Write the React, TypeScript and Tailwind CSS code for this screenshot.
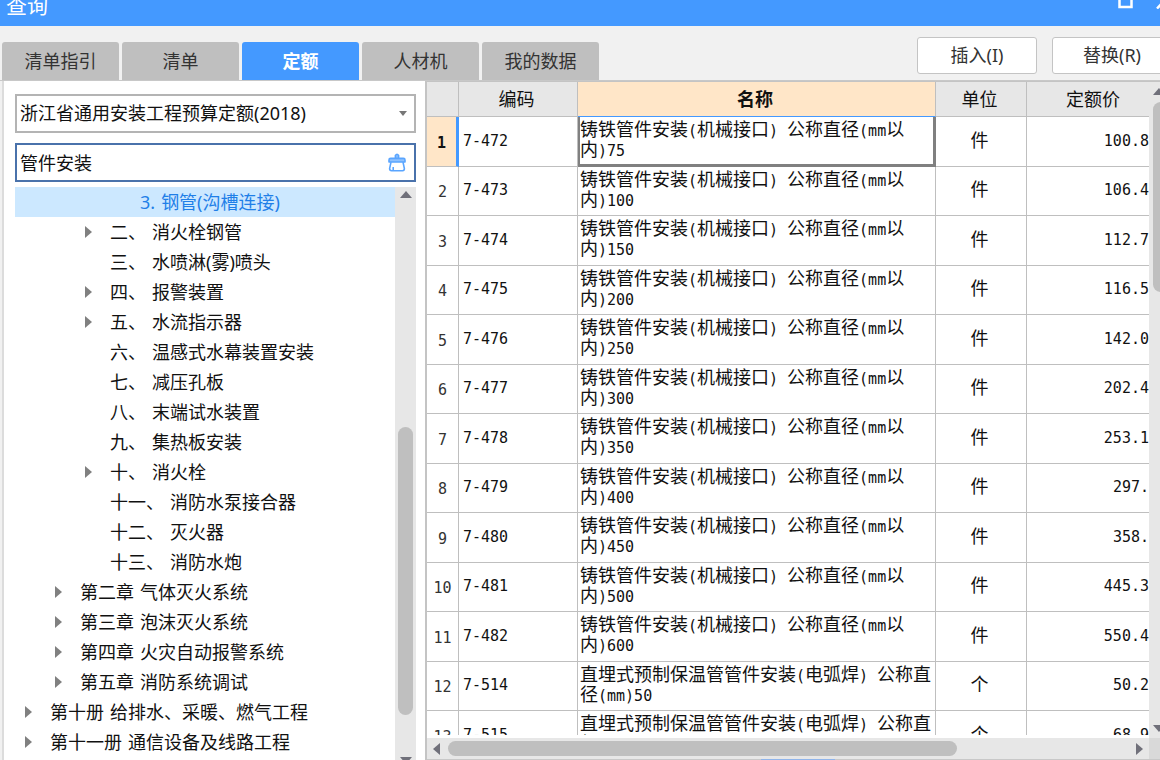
import { useState } from "react"
import clsx from "clsx"

type TreeNode = { no: string; title: string; level: number; expandable?: boolean }

const tabs = ["清单指引", "清单", "定额", "人材机", "我的数据"]

const tree: TreeNode[] = [
  { no: "3.", title: "钢管(沟槽连接)", level: 3 },
  { no: "二、", title: "消火栓钢管", level: 2, expandable: true },
  { no: "三、", title: "水喷淋(雾)喷头", level: 2 },
  { no: "四、", title: "报警装置", level: 2, expandable: true },
  { no: "五、", title: "水流指示器", level: 2, expandable: true },
  { no: "六、", title: "温感式水幕装置安装", level: 2 },
  { no: "七、", title: "减压孔板", level: 2 },
  { no: "八、", title: "末端试水装置", level: 2 },
  { no: "九、", title: "集热板安装", level: 2 },
  { no: "十、", title: "消火栓", level: 2, expandable: true },
  { no: "十一、", title: "消防水泵接合器", level: 2 },
  { no: "十二、", title: "灭火器", level: 2 },
  { no: "十三、", title: "消防水炮", level: 2 },
  { no: "第二章", title: "气体灭火系统", level: 1, expandable: true },
  { no: "第三章", title: "泡沫灭火系统", level: 1, expandable: true },
  { no: "第四章", title: "火灾自动报警系统", level: 1, expandable: true },
  { no: "第五章", title: "消防系统调试", level: 1, expandable: true },
  { no: "第十册", title: "给排水、采暖、燃气工程", level: 0, expandable: true },
  { no: "第十一册", title: "通信设备及线路工程", level: 0, expandable: true },
]

const indents = ["pl-[10px]", "pl-[40px]", "pl-[70px]", "pl-[100px]"]

const castIron = "铸铁管件安装(机械接口) 公称直径(mm以内)"
const buried = "直埋式预制保温管管件安装(电弧焊) 公称直径(mm)"

const rows = [
  { code: "7-472", name: castIron + "75", unit: "件", price: "100.8" },
  { code: "7-473", name: castIron + "100", unit: "件", price: "106.4" },
  { code: "7-474", name: castIron + "150", unit: "件", price: "112.7" },
  { code: "7-475", name: castIron + "200", unit: "件", price: "116.5" },
  { code: "7-476", name: castIron + "250", unit: "件", price: "142.0" },
  { code: "7-477", name: castIron + "300", unit: "件", price: "202.4" },
  { code: "7-478", name: castIron + "350", unit: "件", price: "253.1" },
  { code: "7-479", name: castIron + "400", unit: "件", price: "297." },
  { code: "7-480", name: castIron + "450", unit: "件", price: "358." },
  { code: "7-481", name: castIron + "500", unit: "件", price: "445.3" },
  { code: "7-482", name: castIron + "600", unit: "件", price: "550.4" },
  { code: "7-514", name: buried + "50", unit: "个", price: "50.2" },
  { code: "7-515", name: buried + "65", unit: "个", price: "68.9" },
]

function Arrow({ dir, className }: { dir: "up" | "down" | "left" | "right"; className?: string }) {
  const points = {
    up: "0,7 6,0 12,7",
    down: "0,0 12,0 6,7",
    left: "7,0 7,12 0,6",
    right: "0,0 7,6 0,12",
  }[dir]
  const vertical = dir === "up" || dir === "down"
  return (
    <svg
      width={vertical ? 12 : 7}
      height={vertical ? 7 : 12}
      viewBox={vertical ? "0 0 12 7" : "0 0 7 12"}
      className={clsx("shrink-0", className)}
      aria-hidden="true"
    >
      <polygon points={points} fill="currentColor" />
    </svg>
  )
}

// Latin runs are half the width of a Chinese character in the grid
function GridText({ text }: { text: string }) {
  return text.split(/([\x20-\x7e]+)/).map((part, i) =>
    i % 2 ? (
      <span key={i} className="text-[15px] leading-none">
        {part}
      </span>
    ) : (
      part
    ),
  )
}

function TitleBar() {
  return (
    <header className="flex h-[26px] shrink-0 items-start justify-between bg-[#4499ff] pl-[6px] text-white">
      <h1 className="text-[21px] leading-[10px]">查询</h1>
      <svg width="42" height="9" viewBox="0 0 42 9" fill="none" stroke="currentColor" aria-hidden="true">
        <path d="M1.5 -7H13.5V7H1.5Z" strokeWidth="2.5" />
        <path d="M39 8.5L53 -6" strokeWidth="2.5" />
      </svg>
    </header>
  )
}

function Toolbar() {
  const [active, setActive] = useState("定额")
  return (
    <div className="flex h-[54px] shrink-0 items-end justify-between overflow-hidden bg-[#f1f1f1] pl-[2px]">
      <nav className="flex gap-[3px]">
        {tabs.map((tab) => (
          <button
            key={tab}
            onClick={() => setActive(tab)}
            className={clsx(
              "h-[38px] w-[117px] rounded-t-[3px] text-[18px]",
              tab === active ? "bg-[#4499ff] font-bold text-white" : "bg-[#bfbfbf] text-[#333333]",
            )}
          >
            {tab}
          </button>
        ))}
      </nav>
      <div className="-mr-3 flex shrink-0 gap-[15px] self-start pt-[11px]">
        <button className="h-[37px] w-[120px] rounded-[3px] border border-[#c4c4c4] bg-white text-[18px] text-[#333333]">
          插入(I)
        </button>
        <button className="h-[37px] w-[120px] rounded-[3px] border border-[#c4c4c4] bg-white text-[18px] text-[#333333]">
          替换(R)
        </button>
      </div>
    </div>
  )
}

function BrushIcon() {
  return (
    <svg width="18" height="19" viewBox="0 0 18 19" fill="none" stroke="#5aa5ff" strokeWidth="1.6" strokeLinejoin="round" aria-hidden="true">
      <path d="M7.4 5.4V2.4Q9 0 10.6 2.4V5.4" fill="#8fc2ff" />
      <path d="M2.6 5.4H15.4Q17 5.4 17 7V9H1V7Q1 5.4 2.6 5.4Z" fill="#8fc2ff" />
      <path d="M3 9.2L1.6 15.6Q1.6 17.8 3.6 17.8H14.6Q16.4 17.8 16.4 15.6L15 9.2" />
      <path d="M5.2 17.4V14" />
    </svg>
  )
}

function Sidebar() {
  const [query, setQuery] = useState("管件安装")
  return (
    <aside className="flex w-[423px] shrink-0 flex-col border-l-2 border-[#dcdcdc] bg-white pt-[13px] pr-[9px] pl-[11px]">
      <div className="grid shrink-0">
        <select
          aria-label="定额库"
          className="col-start-1 row-start-1 h-[39px] appearance-none border-2 border-[#b4b4b4] bg-white px-[3px] text-[18px] text-[#111111]"
        >
          <option>浙江省通用安装工程预算定额(2018)</option>
        </select>
        <svg
          width="8"
          height="5"
          viewBox="0 0 8 5"
          className="pointer-events-none col-start-1 row-start-1 mr-[9px] self-center justify-self-end text-[#777777]"
          aria-hidden="true"
        >
          <polygon points="0,0 8,0 4,5" fill="currentColor" />
        </svg>
      </div>
      <div className="mt-[10px] flex h-[39px] shrink-0 items-center border-2 border-[#4a72ab] pr-[8px] pl-[3px]">
        <input
          aria-label="查询条件"
          value={query}
          onChange={(e) => setQuery(e.target.value)}
          className="min-w-0 flex-1 pt-[2px] text-[18px] text-[#111111] outline-none"
        />
        <button aria-label="清除" onClick={() => setQuery("")}>
          <BrushIcon />
        </button>
      </div>
      <div className="mt-[5px] flex min-h-0 flex-1 overflow-hidden">
        <ul className="min-w-0 flex-1">
          {tree.map((node, i) => (
            <li key={node.title}>
              <button
                className={clsx(
                  "flex h-[30px] w-full items-center gap-[18px] text-[18px] whitespace-nowrap",
                  indents[node.level],
                  i === 0 ? "bg-[#cce8ff] text-[#1f7fe8]" : "text-[#111111]",
                )}
              >
                <Arrow dir="right" className={node.expandable ? "text-[#808080]" : "invisible"} />
                <span className="flex gap-[6px]">
                  <span>{node.no}</span>
                  <span>{node.title}</span>
                </span>
              </button>
            </li>
          ))}
        </ul>
        <div className="flex w-[21px] shrink-0 flex-col items-center bg-[#e7e7e7] pt-[4px] text-[#70707a]">
          <Arrow dir="up" />
          <div className="mt-[229px] h-[288px] w-[15px] shrink-0 rounded-full bg-[#bfbfbf]" />
          <Arrow dir="down" className="mt-[42px]" />
        </div>
      </div>
    </aside>
  )
}

function QuotaTable() {
  const head = "border-r border-b border-[#bfbfbf] bg-[#e7e7e7] pt-[2px] pr-[3px] pb-0 pl-0 font-normal"
  const cell = "border-r border-b border-[#bfbfbf] pb-[2px]"
  return (
    <table className="w-full table-fixed border-separate border-spacing-0 font-['DejaVu_Sans_Mono','Noto_Sans_CJK_SC',monospace] text-[18px] leading-[20px] text-[#111111]">
      <colgroup>
        <col className="w-[32px]" />
        <col className="w-[119px]" />
        <col />
        <col className="w-[91px]" />
        <col className="w-[122px]" />
      </colgroup>
      <thead>
        <tr className="h-[35px]">
          <th className={head} aria-label="序号" />
          <th className={head}>编码</th>
          <th className="border-r border-b border-r-[#bfbfbf] border-b-[#4499ff] bg-[#ffe6c8] pt-[2px] pr-[3px] pb-0 pl-0 font-bold">
            名称
          </th>
          <th className={head}>单位</th>
          <th className="border-b border-[#bfbfbf] bg-[#e7e7e7] pt-[2px] pr-0 pb-0 pl-[10px] font-normal">定额价</th>
        </tr>
      </thead>
      <tbody>
        {rows.map((row, i) => (
          <tr key={row.code} className="odd:h-[50px] even:h-[49px]">
            <th
              scope="row"
              className={clsx(
                "border-b border-b-[#bfbfbf] pt-[2px] text-[15px]",
                i === 0
                  ? "border-r-3 border-r-[#4499ff] bg-[#ffe6c8] font-bold"
                  : "border-r border-r-[#bfbfbf] font-normal text-[#333333]",
              )}
            >
              {i + 1}
            </th>
            <td className={clsx(cell, "pl-[4px] text-[15px]")}>{row.code}</td>
            <td
              className={clsx(
                "pt-[3px] pb-0 align-top",
                i === 0
                  ? "border-r-3 border-b-3 border-l-2 border-[#808080] pl-0"
                  : "border-r border-b border-[#bfbfbf] pl-[2px]",
              )}
            >
              <GridText text={row.name} />
            </td>
            <td className={clsx(cell, "pr-[3px] text-center")}>{row.unit}</td>
            <td className="border-b border-[#bfbfbf] pb-[2px] text-right text-[15px]">{row.price}</td>
          </tr>
        ))}
      </tbody>
    </table>
  )
}

export default function App() {
  return (
    <div className="flex h-screen flex-col overflow-hidden bg-[#f1f1f1] font-['Noto_Sans','Noto_Sans_CJK_SC',sans-serif]">
      <TitleBar />
      <Toolbar />
      <main className="flex min-h-0 flex-1 border-t border-[#c8c8c8] pl-[2px]">
        <Sidebar />
        <section className="flex min-w-0 flex-1 flex-col border-t border-l-2 border-[#c4c4c4] bg-white">
          <div className="flex min-h-0 flex-1">
            <div className="mb-[3px] min-w-0 flex-1 overflow-hidden">
              <QuotaTable />
            </div>
            <div className="flex w-[11px] shrink-0 flex-col overflow-hidden bg-[#e7e7e7] pl-[4px] text-[#70707a]">
              <Arrow dir="up" className="mt-[6px]" />
              <div className="mt-[7px] h-[190px] w-[15px] shrink-0 rounded-full bg-[#bfbfbf]" />
              <Arrow dir="down" className="mt-auto mb-[6px]" />
            </div>
          </div>
          <div className="flex h-[21px] shrink-0 bg-[#e7e7e7] text-[#70707a]">
            <div className="flex min-w-0 flex-1 items-center pr-[6px] pl-[6px]">
              <Arrow dir="left" />
              <div className="ml-[8px] h-[15px] w-[509px] rounded-full bg-[#bfbfbf]" />
              <Arrow dir="right" className="ml-auto" />
            </div>
            <div className="w-[11px] bg-[#d9d9d9]" />
          </div>
          <div className="h-px shrink-0 bg-[#c8c8c8]">
            <div className="ml-[334px] h-px w-[74px] bg-[#8fb4ea]" />
          </div>
        </section>
      </main>
    </div>
  )
}
